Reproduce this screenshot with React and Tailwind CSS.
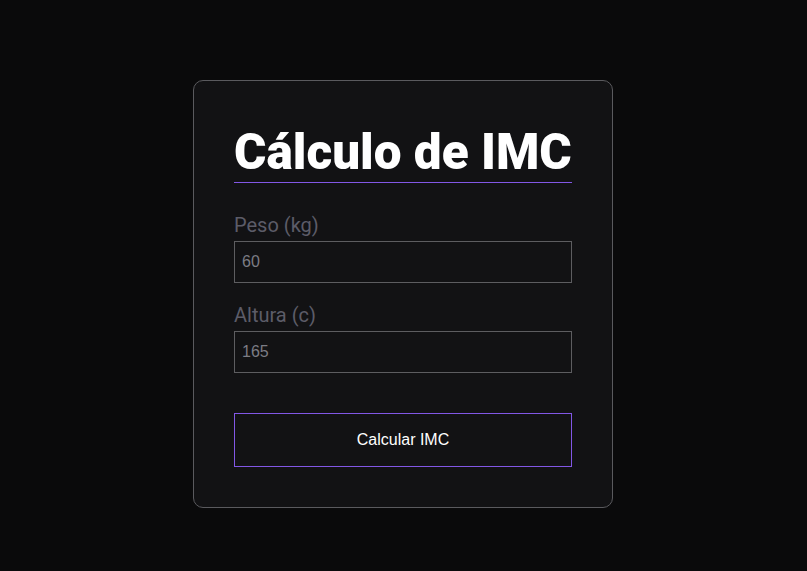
import React, { useState } from 'react';

const App = () => {
    const [peso, setPeso] = useState('60');
    const [altura, setAltura] = useState('165');

    return (
        <div className="min-h-screen bg-[#0a0a0b] flex justify-center items-start pt-[80px]">
            <div className="w-[420px] mr-[1px] bg-[#121214] border border-[#5a5a5e] rounded-[10px] px-10 pt-[47px] pb-[40px] font-['Roboto',sans-serif]">
                <div className="flex flex-col">
                    <h1 className="text-[49.5px] leading-[48px] font-black text-white pb-[6px] whitespace-nowrap">
                        Cálculo de IMC
                    </h1>
                    <div className="h-px bg-[#8257e5]"></div>
                </div>

                <div className="mt-[28px] flex flex-col">
                    <label className="text-[20px] leading-[28px] text-[#5c5c68]">Peso (kg)</label>
                    <input
                        value={peso}
                        onChange={(e) => setPeso(e.target.value)}
                        className="mt-[2px] h-[42px] border border-[#5d5d60] bg-transparent px-[7px] text-[16px] text-[#7c7c84] font-['Liberation_Sans',sans-serif] outline-none"
                    />
                </div>

                <div className="mt-[18px] flex flex-col">
                    <label className="text-[20px] leading-[28px] text-[#5c5c68]">Altura (c)</label>
                    <input
                        value={altura}
                        onChange={(e) => setAltura(e.target.value)}
                        className="mt-[2px] h-[42px] border border-[#5d5d60] bg-transparent px-[7px] text-[16px] text-[#7c7c84] font-['Liberation_Sans',sans-serif] outline-none"
                    />
                </div>

                <button className="mt-[40px] w-full h-[54px] border border-[#8257e5] text-white text-[16px] font-['Liberation_Sans',sans-serif]">
                    Calcular IMC
                </button>
            </div>
        </div>
    );
};

export default App;
